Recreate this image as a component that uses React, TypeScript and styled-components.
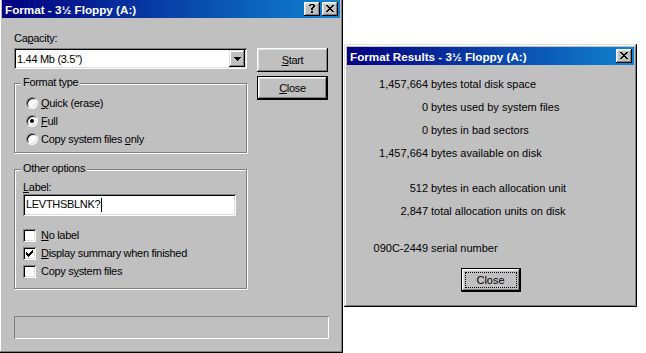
import React from "react";
import styled, { createGlobalStyle } from "styled-components";

const GlobalStyle = createGlobalStyle`
  html, body {
    margin: 0;
    padding: 0;
    background: #fff;
  }
  body {
    font-family: "Liberation Sans", Arial, sans-serif;
    font-size: 11px;
    color: #000;
  }
`;

const Desktop = styled.div`
  position: relative;
  width: 646px;
  height: 353px;
  overflow: hidden;
  background: #fff;
`;

interface WindowBox {
  $left: number;
  $top: number;
  $width: number;
  $height: number;
}

const Window = styled.div<WindowBox>`
  position: absolute;
  left: ${(p) => p.$left}px;
  top: ${(p) => p.$top}px;
  width: ${(p) => p.$width}px;
  height: ${(p) => p.$height}px;
  box-sizing: border-box;
  padding: 3px;
  background: #c0c0c0;
  box-shadow: inset -1px -1px #000, inset 1px 1px #dfdfdf,
    inset -2px -2px #808080, inset 2px 2px #fff;
  display: flex;
  flex-direction: column;
`;

const TitleBar = styled.div`
  flex: none;
  height: 18px;
  display: flex;
  align-items: center;
  justify-content: space-between;
  padding: 0 2px 0 3px;
  background: linear-gradient(90deg, #000080, #1084d0);
  color: #fff;
  font-weight: bold;
  font-size: 11.7px;
  white-space: nowrap;
`;

const CaptionButtons = styled.div`
  display: flex;
  gap: 2px;
`;

const CaptionButton = styled.div`
  width: 16px;
  height: 14px;
  box-sizing: border-box;
  background: #c0c0c0;
  box-shadow: inset -1px -1px #000, inset 1px 1px #fff,
    inset -2px -2px #808080, inset 2px 2px #dfdfdf;
  display: flex;
  align-items: center;
  justify-content: center;
  padding-bottom: 1px;
`;

// pixel glyphs for the caption buttons and check mark
const pixelGlyph = (rows: string[]) =>
  rows.flatMap((row, y) =>
    row.split("").map((c, x) =>
      c === "X" ? <rect key={`${x}-${y}`} x={x} y={y} width={1} height={1} /> : null
    )
  );

const Glyph = ({ rows }: { rows: string[] }) => (
  <svg
    width={rows[0].length}
    height={rows.length}
    viewBox={`0 0 ${rows[0].length} ${rows.length}`}
    shapeRendering="crispEdges"
    fill="#000"
  >
    {pixelGlyph(rows)}
  </svg>
);

const CLOSE_GLYPH = [
  "XX....XX",
  ".XX..XX.",
  "..XXXX..",
  "...XX...",
  "..XXXX..",
  ".XX..XX.",
  "XX....XX",
];

const HELP_GLYPH = [
  ".XXXX.",
  "XX..XX",
  "....XX",
  "...XX.",
  "..XX..",
  "..XX..",
  "......",
  "..XX..",
  "..XX..",
];

const CHECK_GLYPH = [
  "......X",
  ".....XX",
  "X...XXX",
  "XX.XXX.",
  "XXXXX..",
  ".XXX...",
  "..X....",
];

const FormatBody = styled.div`
  padding: 14px 0 0 12px;
  display: flex;
  flex-direction: column;
  letter-spacing: -0.3px;
`;

const TopRow = styled.div`
  display: flex;
  align-items: flex-start;
  gap: 10px;
`;

const LeftCol = styled.div`
  width: 233px;
  display: flex;
  flex-direction: column;
`;

const RightCol = styled.div`
  margin-top: 16px;
  display: flex;
  flex-direction: column;
  gap: 4px;
`;

const FieldLabel = styled.div`
  height: 13px;
  line-height: 13px;
`;

const Mn = styled.span`
  text-decoration: underline;
  text-underline-offset: 1px;
`;

const Sunken = styled.div`
  box-sizing: border-box;
  background: #fff;
  box-shadow: inset 1px 1px #808080, inset -1px -1px #fff,
    inset 2px 2px #000, inset -2px -2px #dfdfdf;
  display: flex;
  align-items: center;
`;

const Combo = styled(Sunken)`
  margin-top: 3px;
  height: 21px;
  padding: 2px 2px 2px 3px;
  justify-content: space-between;
`;

const DropButton = styled.div`
  width: 16px;
  height: 17px;
  box-sizing: border-box;
  background: #c0c0c0;
  box-shadow: inset -1px -1px #000, inset 1px 1px #dfdfdf,
    inset -2px -2px #808080, inset 2px 2px #fff;
  display: flex;
  align-items: center;
  justify-content: center;
`;

const GroupBox = styled.div<{ $gapTop: number }>`
  position: relative;
  margin-top: ${(p) => p.$gapTop}px;
  box-sizing: border-box;
  border: 1px solid #808080;
  box-shadow: 1px 1px 0 #fff, inset 1px 1px 0 #fff;
  display: flex;
  flex-direction: column;
`;

const GroupTitle = styled.span`
  position: absolute;
  top: -8px;
  left: 6px;
  padding: 0 2px;
  line-height: 13px;
  background: #c0c0c0;
`;

const RadioList = styled.div`
  padding: 10px 0 4px 11px;
`;

const OptionRow = styled.div`
  height: 18px;
  display: flex;
  align-items: center;
`;

const RadioDot = styled.span<{ $on: boolean }>`
  width: 12px;
  height: 12px;
  box-sizing: border-box;
  margin-right: 3px;
  border-radius: 50%;
  border: 1px solid;
  border-color: #808080 #fff #fff #808080;
  background: #fff;
  box-shadow: inset 1px 1px #000, inset -1px -1px #dfdfdf;
  display: flex;
  align-items: center;
  justify-content: center;
  &::after {
    content: "";
    width: 4px;
    height: 4px;
    border-radius: 50%;
    background: ${(p) => (p.$on ? "#000" : "transparent")};
  }
`;

const OtherOptions = styled.div`
  padding: 11px 0 8px 8px;
  display: flex;
  flex-direction: column;
`;

const LabelField = styled(Sunken)`
  width: 213px;
  height: 22px;
  padding: 0 3px;
`;

const Caret = styled.span`
  display: inline-block;
  width: 1px;
  height: 14px;
  margin-left: 1px;
  background: #000;
  vertical-align: middle;
`;

const CheckList = styled.div`
  margin-top: 10px;
`;

const CheckBox = styled(Sunken)`
  width: 13px;
  height: 13px;
  margin-right: 5px;
  justify-content: center;
`;

const Progress = styled.div`
  margin-top: 27px;
  width: 315px;
  height: 23px;
  box-sizing: border-box;
  box-shadow: inset 1px 1px #808080, inset -1px -1px #fff;
`;

const PushButton = styled.button<{ $default?: boolean; $width: number }>`
  width: ${(p) => p.$width}px;
  height: 24px;
  box-sizing: border-box;
  padding: 0;
  font: inherit;
  font-size: 11px;
  letter-spacing: inherit;
  color: #000;
  background: #c0c0c0;
  border: ${(p) => (p.$default ? "1px solid #000" : "none")};
  box-shadow: inset -1px -1px #000, inset 1px 1px #fff,
    inset -2px -2px #808080, inset 2px 2px #dfdfdf;
  display: flex;
  align-items: center;
  justify-content: center;
  position: relative;
`;

const FocusRing = styled.span`
  position: absolute;
  inset: 3px;
  border: 1px dotted #000;
`;

const ResultsBody = styled.div`
  padding-top: 7px;
  display: flex;
  flex-direction: column;
`;

const StatGroup = styled.div<{ $gapTop: number }>`
  margin-top: ${(p) => p.$gapTop}px;
  display: grid;
  grid-template-columns: 81px auto;
  column-gap: 3px;
  grid-auto-rows: 23px;
  align-items: center;
`;

const StatNum = styled.span`
  text-align: right;
`;

const ButtonBar = styled.div`
  margin-top: 9px;
  display: flex;
  justify-content: center;
`;

const stats: [string, string][][] = [
  [
    ["1,457,664", "bytes total disk space"],
    ["0", "bytes used by system files"],
    ["0", "bytes in bad sectors"],
    ["1,457,664", "bytes available on disk"],
  ],
  [
    ["512", "bytes in each allocation unit"],
    ["2,847", "total allocation units on disk"],
  ],
  [["090C-2449", "serial number"]],
];

const groupGaps = [0, 12, 14];

export default function App() {
  return (
    <Desktop>
      <GlobalStyle />
      <Window $left={-1} $top={-3} $width={344} $height={356}>
        <TitleBar>
          <span>Format - 3½ Floppy (A:)</span>
          <CaptionButtons>
            <CaptionButton>
              <Glyph rows={HELP_GLYPH} />
            </CaptionButton>
            <CaptionButton>
              <Glyph rows={CLOSE_GLYPH} />
            </CaptionButton>
          </CaptionButtons>
        </TitleBar>
        <FormatBody>
          <TopRow>
            <LeftCol>
              <FieldLabel>
                Ca<Mn>p</Mn>acity:
              </FieldLabel>
              <Combo>
                <span>1.44 Mb (3.5")</span>
                <DropButton>
                  <svg width="7" height="4" viewBox="0 0 7 4" shapeRendering="crispEdges">
                    <path d="M0 0h7v1h-1v1h-1v1h-1v1h-1v-1h-1v-1h-1v-1h-1z" fill="#000" />
                  </svg>
                </DropButton>
              </Combo>
              <GroupBox $gapTop={14}>
                <GroupTitle>Format type</GroupTitle>
                <RadioList>
                  <OptionRow>
                    <RadioDot $on={false} />
                    <span>
                      <Mn>Q</Mn>uick (erase)
                    </span>
                  </OptionRow>
                  <OptionRow>
                    <RadioDot $on />
                    <span>
                      <Mn>F</Mn>ull
                    </span>
                  </OptionRow>
                  <OptionRow>
                    <RadioDot $on={false} />
                    <span>
                      Copy system files <Mn>o</Mn>nly
                    </span>
                  </OptionRow>
                </RadioList>
              </GroupBox>
              <GroupBox $gapTop={16}>
                <GroupTitle>Other options</GroupTitle>
                <OtherOptions>
                  <FieldLabel>
                    <Mn>L</Mn>abel:
                  </FieldLabel>
                  <LabelField>
                    <span>
                      LEVTHSBLNK?
                      <Caret />
                    </span>
                  </LabelField>
                  <CheckList>
                    <OptionRow>
                      <CheckBox />
                      <span>
                        <Mn>N</Mn>o label
                      </span>
                    </OptionRow>
                    <OptionRow>
                      <CheckBox>
                        <Glyph rows={CHECK_GLYPH} />
                      </CheckBox>
                      <span>
                        <Mn>D</Mn>isplay summary when finished
                      </span>
                    </OptionRow>
                    <OptionRow>
                      <CheckBox />
                      <span>
                        Copy s<Mn>y</Mn>stem files
                      </span>
                    </OptionRow>
                  </CheckList>
                </OtherOptions>
              </GroupBox>
            </LeftCol>
            <RightCol>
              <PushButton $width={71}>
                <span>
                  <Mn>S</Mn>tart
                </span>
              </PushButton>
              <PushButton $width={71} $default>
                <span>
                  <Mn>C</Mn>lose
                </span>
              </PushButton>
            </RightCol>
          </TopRow>
          <Progress />
        </FormatBody>
      </Window>

      <Window $left={344} $top={44} $width={293} $height={263}>
        <TitleBar>
          <span>Format Results - 3½ Floppy (A:)</span>
          <CaptionButton>
            <Glyph rows={CLOSE_GLYPH} />
          </CaptionButton>
        </TitleBar>
        <ResultsBody>
          {stats.map((group, gi) => (
            <StatGroup key={gi} $gapTop={groupGaps[gi]}>
              {group.map(([num, text]) => (
                <React.Fragment key={text}>
                  <StatNum>{num}</StatNum>
                  <span>{text}</span>
                </React.Fragment>
              ))}
            </StatGroup>
          ))}
          <ButtonBar>
            <PushButton $width={60} $default>
              <FocusRing />
              <span>Close</span>
            </PushButton>
          </ButtonBar>
        </ResultsBody>
      </Window>
    </Desktop>
  );
}
